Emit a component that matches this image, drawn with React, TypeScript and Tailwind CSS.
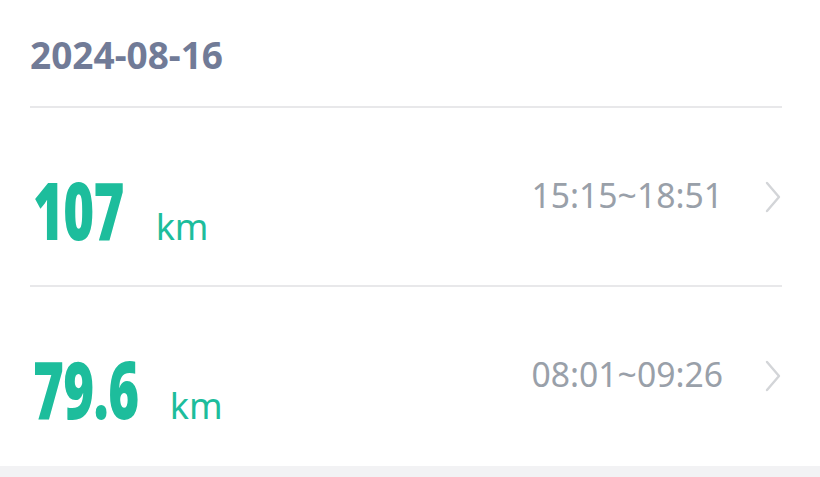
import React from 'react';

type Trip = { distance: string; range: string; numShift: string };

// numbers are drawn condensed (scale-x), so pull km back by the width the transform takes away
const trips: Trip[] = [
  { distance: '107', range: '15:15~18:51', numShift: '-mr-[50px]' },
  { distance: '79.6', range: '08:01~09:26', numShift: '-mr-[58px]' },
];

function Chevron() {
  return (
    <svg width="16" height="32" viewBox="0 0 16 32" className="text-[#d3d5d8]">
      <path d="M2 2 L14 16 L2 30" fill="none" stroke="currentColor" strokeWidth="2.4" strokeLinecap="round" strokeLinejoin="round" />
    </svg>
  );
}

function TripRow({ trip }: { trip: Trip }) {
  return (
    <div className="flex items-center h-[179px] border-t-2 border-[#e8e8ea]">
      <div className="flex items-baseline flex-1 pt-[24px] pl-[3px]">
        <span
          className={`inline-block origin-left scale-x-[0.66] ${trip.numShift} font-['Noto_Sans',sans-serif] font-black text-[80px] leading-none tracking-[-1px] text-[#1dbd9c]`}
        >
          {trip.distance}
        </span>
        <span className="ml-[35px] font-['Noto_Sans',sans-serif] text-[36px] leading-none text-[#1dbd9c]">km</span>
      </div>
      <span className="font-['Noto_Sans',sans-serif] text-[33.7px] leading-none text-[#99a0a9] pt-[2px] pb-[4px]">
        {trip.range}
      </span>
      <div className="ml-[42px] mr-[1px]">
        <Chevron />
      </div>
    </div>
  );
}

export default function App() {
  return (
    <div className="w-[820px] h-[477px] bg-white overflow-hidden flex flex-col">
      <div className="pl-[30px] pr-[38px] flex-1">
        <div className="h-[106px] flex items-center pt-[2px]">
          <h1 className="font-['Noto_Sans',sans-serif] font-bold text-[37px] leading-none text-[#717b97]">2024-08-16</h1>
        </div>
        {trips.map(trip => (
          <TripRow key={trip.range} trip={trip} />
        ))}
      </div>
      <div className="h-[11px] bg-[#f2f2f4]" />
    </div>
  );
}
